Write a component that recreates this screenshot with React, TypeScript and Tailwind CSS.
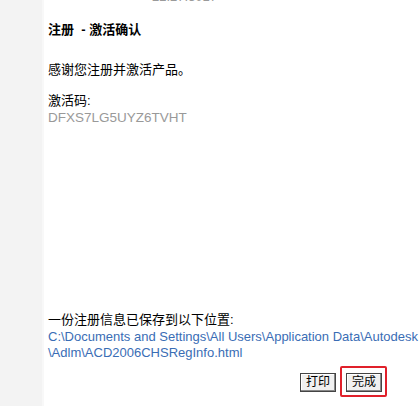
import React from "react"

const cjk = { fontFamily: '"Liberation Sans", Arial, "Noto Sans CJK SC", sans-serif' }

export default function App() {
  return (
    <div className="flex w-[420px] h-[406px] overflow-hidden bg-white text-[13px] leading-[16px] text-black" style={cjk}>
      {/* left rail */}
      <div className="w-[42px] shrink-0 bg-[#f3f3f3]" />
      <div className="w-[2px] shrink-0 bg-[#f8f8f8]" />

      <div className="relative flex flex-1 flex-col pl-[4px]">
        {/* clipped header text */}
        <div className="-mt-[11px] h-[16px] pl-[104px] text-[#9a9a9a]">22.27.3017</div>

        <h1 className="mt-[17px] font-bold">注册&nbsp; - 激活确认</h1>
        <p className="mt-[24px]">感谢您注册并激活产品。</p>

        <p className="mt-[15px]">激活码:</p>
        <p className="mt-[1px] text-[13.5px] text-[#999999]">DFXS7LG5UYZ6TVHT</p>

        <div className="mt-[186px] leading-[16.5px]">
          <p>一份注册信息已保存到以下位置:</p>
          <p className="whitespace-nowrap text-[#3a6db5]">C:\Documents and Settings\All Users\Application Data\Autodesk</p>
          <p className="whitespace-nowrap text-[#3a6db5]">\Adlm\ACD2006CHSRegInfo.html</p>
        </div>

        <div className="mt-[11px] flex gap-[10px] pl-[252px]">
          <button className="h-[19px] w-[36px] border border-[#444] bg-[#f0f0f0] text-[12px] leading-[17px] shadow-[inset_-1px_-1px_0_#888,inset_1px_1px_0_#fff]">
            打印
          </button>
          <div className="relative">
            <button className="h-[19px] w-[36px] border border-[#444] bg-[#f0f0f0] text-[12px] leading-[17px] shadow-[inset_-1px_-1px_0_#888,inset_1px_1px_0_#fff]">
              完成
            </button>
            <div className="absolute -left-[6px] -top-[7px] h-[31px] w-[47px] rounded-[2px] border-2 border-[#e0202a]" />
          </div>
        </div>
      </div>
    </div>
  )
}
